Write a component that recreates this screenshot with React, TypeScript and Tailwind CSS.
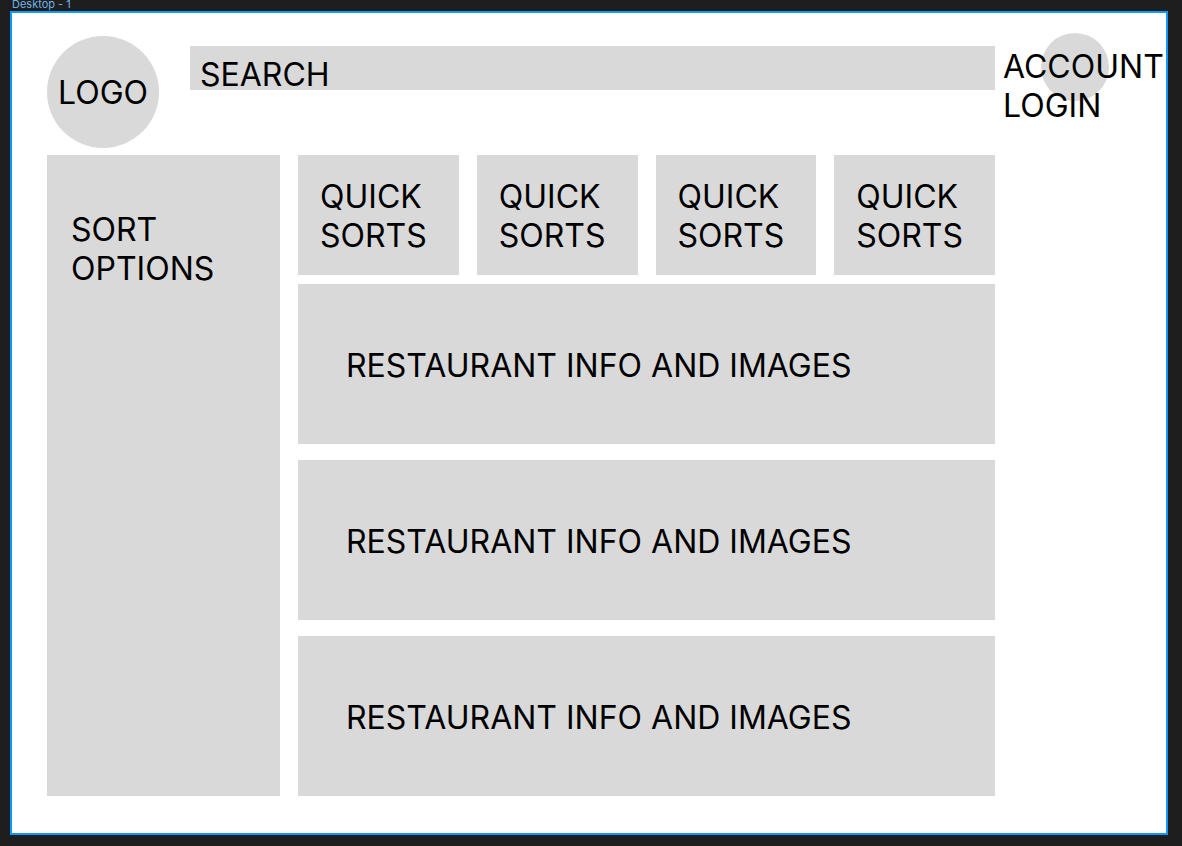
const quickSorts = [1, 2, 3, 4];
const restaurants = [1, 2, 3];

export default function App() {
  return (
    <div className="flex min-h-screen flex-col bg-[#1e1e1e] pr-[14px] pb-[11px] pl-[10px] font-['Inter',sans-serif] text-[32px] leading-[39px] text-black antialiased">
      <div className="h-[11px] pl-[2px] text-[11px] leading-[9px] text-[#6fb3e6]">Desktop - 1</div>

      <div className="flex flex-1 flex-col border-2 border-[#0d99ff] bg-white pt-5 pb-[37px] pl-[35px]">
        <header className="flex items-start">
          <a href="#home" className="mt-[3px] flex size-28 shrink-0 items-center justify-center rounded-full bg-[#d9d9d9]">
            LOGO
          </a>
          <input
            type="search"
            aria-label="Search"
            placeholder="SEARCH"
            className="mt-[13px] ml-[31px] h-11 min-w-0 flex-1 bg-[#d9d9d9] pt-3 pl-[10px] outline-none placeholder:text-black placeholder:opacity-100"
          />
          <a href="#login" className="relative w-[171px] shrink-0 pt-[14px] pl-2">
            <span className="absolute top-0 left-[46px] size-[68px] rounded-full bg-[#d9d9d9]" />
            <span className="relative block">
              ACCOUNT
              <br />
              LOGIN
            </span>
          </a>
        </header>

        <div className="mt-[7px] flex flex-1 gap-[18px] pr-[171px]">
          <aside className="w-[233px] shrink-0 bg-[#d9d9d9] pt-[55px] pl-6">
            SORT
            <br />
            OPTIONS
          </aside>

          <main className="flex min-w-0 flex-1 flex-col">
            <div className="grid grid-cols-4 gap-[18px]">
              {quickSorts.map((id) => (
                <button key={id} type="button" className="flex h-[120px] items-start bg-[#d9d9d9] pt-[22px] pl-[22px] text-left">
                  QUICK
                  <br />
                  SORTS
                </button>
              ))}
            </div>
            <div className="mt-[9px] flex flex-1 flex-col gap-4">
              {restaurants.map((id) => (
                <section key={id} className="flex min-h-40 flex-1 items-center bg-[#d9d9d9] pt-[2px] pl-12">
                  RESTAURANT INFO AND IMAGES
                </section>
              ))}
            </div>
          </main>
        </div>
      </div>
    </div>
  );
}
